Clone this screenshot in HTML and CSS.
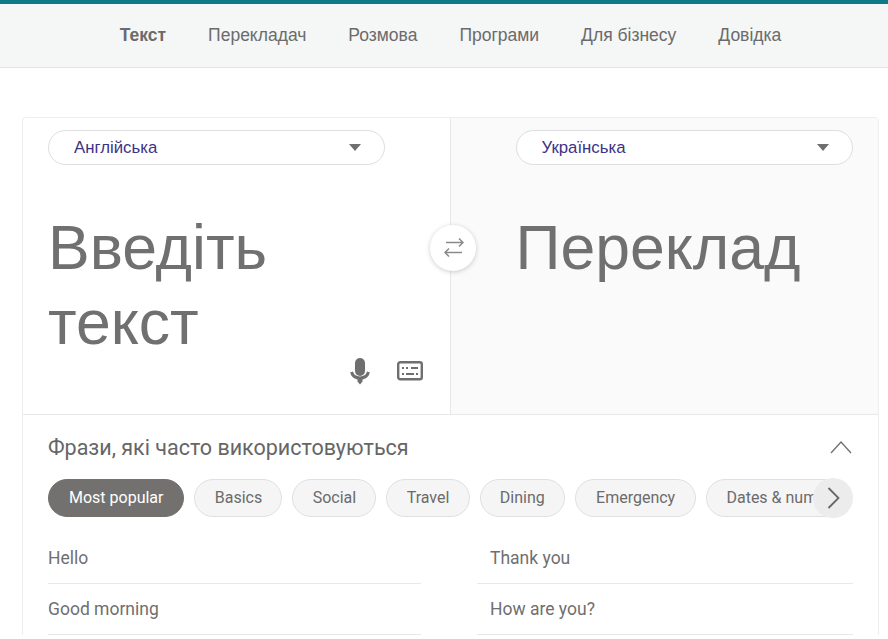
FILE: index.html
```html
<!DOCTYPE html>
<html>
  <head>
    <title>Перекладач</title>
    <link rel="stylesheet" href="styles.css">
  </head>
  <body>
    <nav class="topnav">
      <a class="topnav-link active">Текст</a>
      <a class="topnav-link">Перекладач</a>
      <a class="topnav-link">Розмова</a>
      <a class="topnav-link">Програми</a>
      <a class="topnav-link">Для бізнесу</a>
      <a class="topnav-link">Довідка</a>
    </nav>

    <main class="card">
      <div class="translator">
        <section class="pane pane-source">
          <div class="lang-select">
            <span>Англійська</span>
            <i class="caret"></i>
          </div>
          <div class="big-text">Введіть текст</div>
          <div class="tools">
            <svg width="20" height="28" viewBox="0 0 20 28">
              <rect x="5" y="1" width="10" height="18" rx="5" fill="#6f6f6f" />
              <path d="M1.500 15c1 3.500 4 6 8.500 6s7.500-2.500 8.500-6" fill="none" stroke="#6f6f6f" stroke-width="3" />
              <path d="M7.500 21h5v3.500L10 27.500l-2.500-3z" fill="#6f6f6f" />
            </svg>
            <svg width="26" height="20" viewBox="0 0 26 20">
              <rect x="1.200" y="1.200" width="23.600" height="17" rx="2" fill="none" stroke="#6f6f6f" stroke-width="2.400" />
              <path d="M5 7h2M9 7h2M14 7h7M5 13h2M9 13h8M19 13h2" stroke="#6f6f6f" stroke-width="2" fill="none" />
            </svg>
          </div>
        </section>

        <section class="pane pane-target">
          <div class="lang-select">
            <span>Українська</span>
            <i class="caret"></i>
          </div>
          <div class="big-text">Переклад</div>
        </section>

        <button class="swap-button">
          <svg width="22" height="22" viewBox="0 0 22 22">
            <path d="M4 5.500h17M17 1.500l4 4-4 4M20 15.500H3M7 11.500l-4 4 4 4" fill="none" stroke="#8a8a8a" stroke-width="1.500" />
          </svg>
        </button>
      </div>

      <section class="phrases">
        <div class="phrases-head">
          <h2>Фрази, які часто використовуються</h2>
          <svg class="collapse-icon" width="22" height="14" viewBox="0 0 22 14">
            <path d="M1 13L11 2l10 11" fill="none" stroke="#6f6f6f" stroke-width="1.300" />
          </svg>
        </div>

        <div class="chips-wrap">
          <div class="chips">
            <span class="chip chip-wide chip-active">Most popular</span>
            <span class="chip">Basics</span>
            <span class="chip">Social</span>
            <span class="chip">Travel</span>
            <span class="chip">Dining</span>
            <span class="chip chip-wide">Emergency</span>
            <span class="chip">Dates &amp; numbers</span>
          </div>
          <button class="chips-next">
            <svg width="13" height="22" viewBox="0 0 13 22">
              <path d="M1.500 1l10 10-10 10" fill="none" stroke="#666" stroke-width="1.800" />
            </svg>
          </button>
        </div>

        <div class="phrase-grid">
          <div class="phrase">Hello</div>
          <div class="phrase phrase-right">Thank you</div>
          <div class="phrase">Good morning</div>
          <div class="phrase phrase-right">How are you?</div>
        </div>
      </section>
    </main>
  </body>
</html>
```

FILE: styles.css
```css
html,
body {
  height: 639px;
  overflow: hidden;
}

body {
  margin: 0;
  background-color: #fff;
  color: #6f6f6f;
  font-family: "Liberation Sans", Arial, sans-serif;
}

.topnav {
  display: flex;
  justify-content: center;
  align-items: center;
  gap: 42px;
  height: 63px;
  padding-left: 13px;
  background-color: #f5f6f6;
  border-top: 4px solid #0e7a87;
  border-bottom: 1px solid #e3e3e3;
}

.topnav-link {
  font-size: 17.500px;
  color: #6b6b6b;
}

.topnav-link.active {
  font-weight: bold;
}

.card {
  width: 855px;
  margin: 49px 0 0 22px;
  border: 1px solid #eeeeee;
  border-bottom: none;
  border-radius: 4px 4px 0 0;
}

.translator {
  position: relative;
  display: flex;
  height: 296px;
  border-bottom: 1px solid #e8e8e8;
}

.pane {
  display: flex;
  flex-direction: column;
  box-sizing: border-box;
  width: 50%;
  padding-top: 12px;
}

.pane-source {
  padding-left: 25px;
  padding-right: 65px;
  border-right: 1px solid #e8e8e8;
}

.pane-target {
  padding-left: 65px;
  padding-right: 25px;
  background-color: #fafafa;
}

.lang-select {
  display: flex;
  flex-shrink: 0;
  justify-content: space-between;
  align-items: center;
  box-sizing: border-box;
  width: 337px;
  height: 35px;
  padding: 0 23px 0 25px;
  background-color: #fff;
  border: 1px solid #dedede;
  border-radius: 18px;
  font-size: 16.800px;
  color: #3c3385;
}

.caret {
  width: 0;
  height: 0;
  border-left: 6px solid transparent;
  border-right: 6px solid transparent;
  border-top: 7px solid #6f6f6f;
}

.big-text {
  flex-shrink: 0;
  height: 140px;
  margin-top: 45px;
  font-size: 62.500px;
  line-height: 75px;
  color: #707070;
}

.tools {
  display: flex;
  justify-content: flex-end;
  align-items: center;
  gap: 27px;
  margin-top: auto;
  margin-right: -38px;
  padding-bottom: 29px;
}

.swap-button {
  position: absolute;
  left: 407px;
  top: 107px;
  display: flex;
  justify-content: center;
  align-items: center;
  width: 46px;
  height: 46px;
  padding: 0;
  background-color: #fff;
  border: none;
  border-radius: 50%;
  box-shadow: 0 1px 5px rgba(0, 0, 0, 0.2);
}

.phrases {
  padding: 0 25px;
}

.phrases-head {
  display: flex;
  justify-content: space-between;
  align-items: center;
  height: 64px;
}

.phrases-head h2 {
  margin: 0;
  font-family: Roboto, Arial, sans-serif;
  font-size: 21.500px;
  font-weight: normal;
  color: #666;
}

.collapse-icon {
  margin-right: 1px;
}

.chips-wrap {
  position: relative;
}

.chips {
  display: flex;
  gap: 10px;
  margin-right: 18px;
  overflow: hidden;
}

.chip {
  flex-shrink: 0;
  box-sizing: border-box;
  height: 38px;
  padding: 0 19.250px;
  background-color: #f5f5f5;
  border: 1px solid #e0e0e0;
  border-radius: 19px;
  font-family: Roboto, Arial, sans-serif;
  font-size: 16px;
  line-height: 36px;
  color: #6b6b6b;
}

.chip-wide {
  padding: 0 20px;
}

.chip-active {
  background-color: #737170;
  border-color: #737170;
  color: #fff;
}

.chips-next {
  position: absolute;
  right: 0;
  top: -1px;
  display: flex;
  justify-content: center;
  align-items: center;
  width: 40px;
  height: 40px;
  padding: 0;
  background-color: #ececec;
  border: none;
  border-radius: 50%;
}

.phrase-grid {
  display: grid;
  grid-template-columns: 373px 376px;
  column-gap: 56px;
  margin-top: 16px;
}

.phrase {
  height: 50px;
  border-bottom: 1px solid #e8e8e8;
  font-family: Roboto, Arial, sans-serif;
  font-size: 17.500px;
  line-height: 50px;
  color: #6f6f6f;
}

.phrase-right {
  padding-left: 13px;
}
```
